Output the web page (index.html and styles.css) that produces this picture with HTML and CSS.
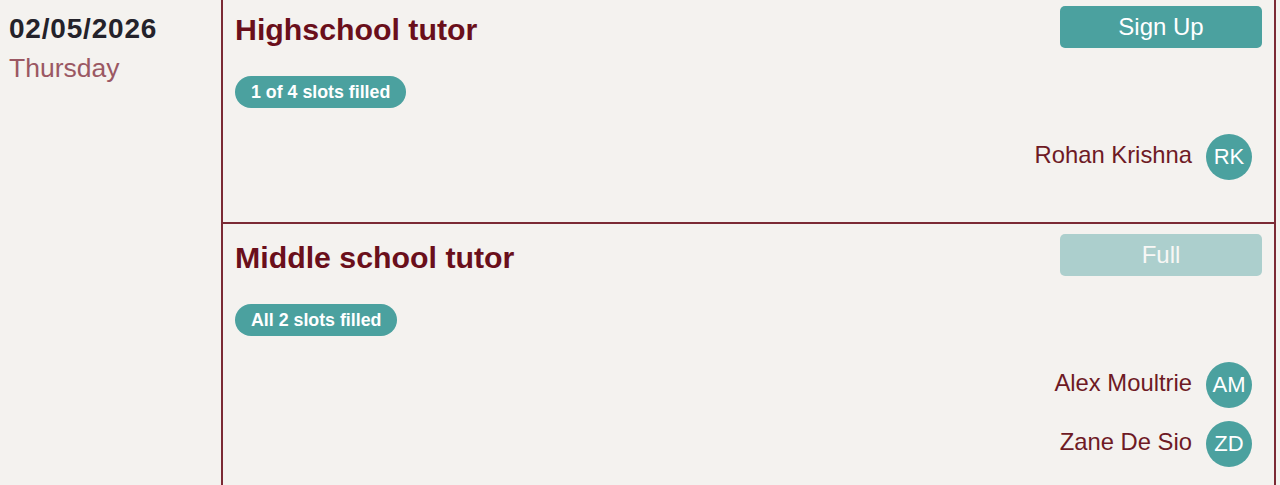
FILE: index.html
```html
<!DOCTYPE html>
<html lang="en">
<head>
<meta charset="utf-8">
<title>Slots</title>
<link rel="stylesheet" href="styles.css">
</head>
<body>
<div class="page">
  <div class="date-col">
    <div class="date">02/05/2026</div>
    <div class="weekday">Thursday</div>
  </div>
  <div class="slots">
    <section class="slot">
      <div class="slot-head">
        <h2 class="slot-title">Highschool tutor</h2>
        <button class="btn">Sign Up</button>
      </div>
      <span class="badge">1 of 4 slots filled</span>
      <ul class="people">
        <li class="person"><span class="name">Rohan Krishna</span><span class="avatar">RK</span></li>
      </ul>
    </section>
    <section class="slot">
      <div class="slot-head">
        <h2 class="slot-title">Middle school tutor</h2>
        <button class="btn btn-disabled" disabled>Full</button>
      </div>
      <span class="badge">All 2 slots filled</span>
      <ul class="people">
        <li class="person"><span class="name">Alex Moultrie</span><span class="avatar">AM</span></li>
        <li class="person"><span class="name">Zane De Sio</span><span class="avatar">ZD</span></li>
      </ul>
    </section>
  </div>
</div>
</body>
</html>
```
FILE: styles.css
```css
html, body {
  margin: 0;
  padding: 0;
  background: #f4f2ef;
  font-family: "Liberation Sans", Arial, Helvetica, sans-serif;
  overflow: hidden;
}

.page {
  display: flex;
  width: 1276px;
  margin-top: -4px;
  min-height: 600px;
}

.date-col {
  width: 221px;
  flex: none;
  padding: 18px 0 0 9px;
  box-sizing: border-box;
}

.date {
  font-size: 28px;
  line-height: 30px;
  font-weight: 700;
  letter-spacing: 0.8px;
  color: #24222a;
}

.weekday {
  margin-top: 9px;
  font-size: 26.5px;
  line-height: 30px;
  color: #9b5863;
}

.slots {
  flex: 1;
  border-left: 2px solid #7b2a35;
  border-right: 2px solid #7b2a35;
}

.slot {
  display: flex;
  flex-direction: column;
  align-items: flex-start;
  padding: 10px 12px 42px 12px;
  border-bottom: 2px solid #7b2a35;
}

.slot-head {
  display: flex;
  justify-content: space-between;
  align-items: flex-start;
  align-self: stretch;
}

.slot-title {
  margin: 7px 0 0 0;
  font-size: 30.3px;
  line-height: 34px;
  font-weight: 700;
  color: #6a0f1b;
}

.btn {
  width: 202px;
  height: 42px;
  border: none;
  border-radius: 5px;
  background: #4ba19f;
  color: #ffffff;
  font-family: inherit;
  font-size: 24px;
  line-height: 42px;
  padding: 0;
}

.btn-disabled {
  opacity: 0.42;
}

.badge {
  margin-top: 28px;
  height: 32px;
  line-height: 32px;
  padding: 0 16px;
  border-radius: 16px;
  background: #4ba19f;
  color: #ffffff;
  font-size: 17.8px;
  font-weight: 700;
}

.people {
  list-style: none;
  margin: 26px 0 0 0;
  padding: 0 10px 0 0;
  align-self: stretch;
  display: flex;
  flex-direction: column;
  gap: 13px;
}

.person {
  display: flex;
  justify-content: flex-end;
  align-items: center;
  gap: 14px;
}

.name {
  font-size: 23.8px;
  color: #6e1a25;
  margin-bottom: 4px;
}

.avatar {
  width: 46px;
  height: 46px;
  border-radius: 50%;
  background: #4ba19f;
  color: #ffffff;
  font-size: 22px;
  display: flex;
  align-items: center;
  justify-content: center;
}
```
